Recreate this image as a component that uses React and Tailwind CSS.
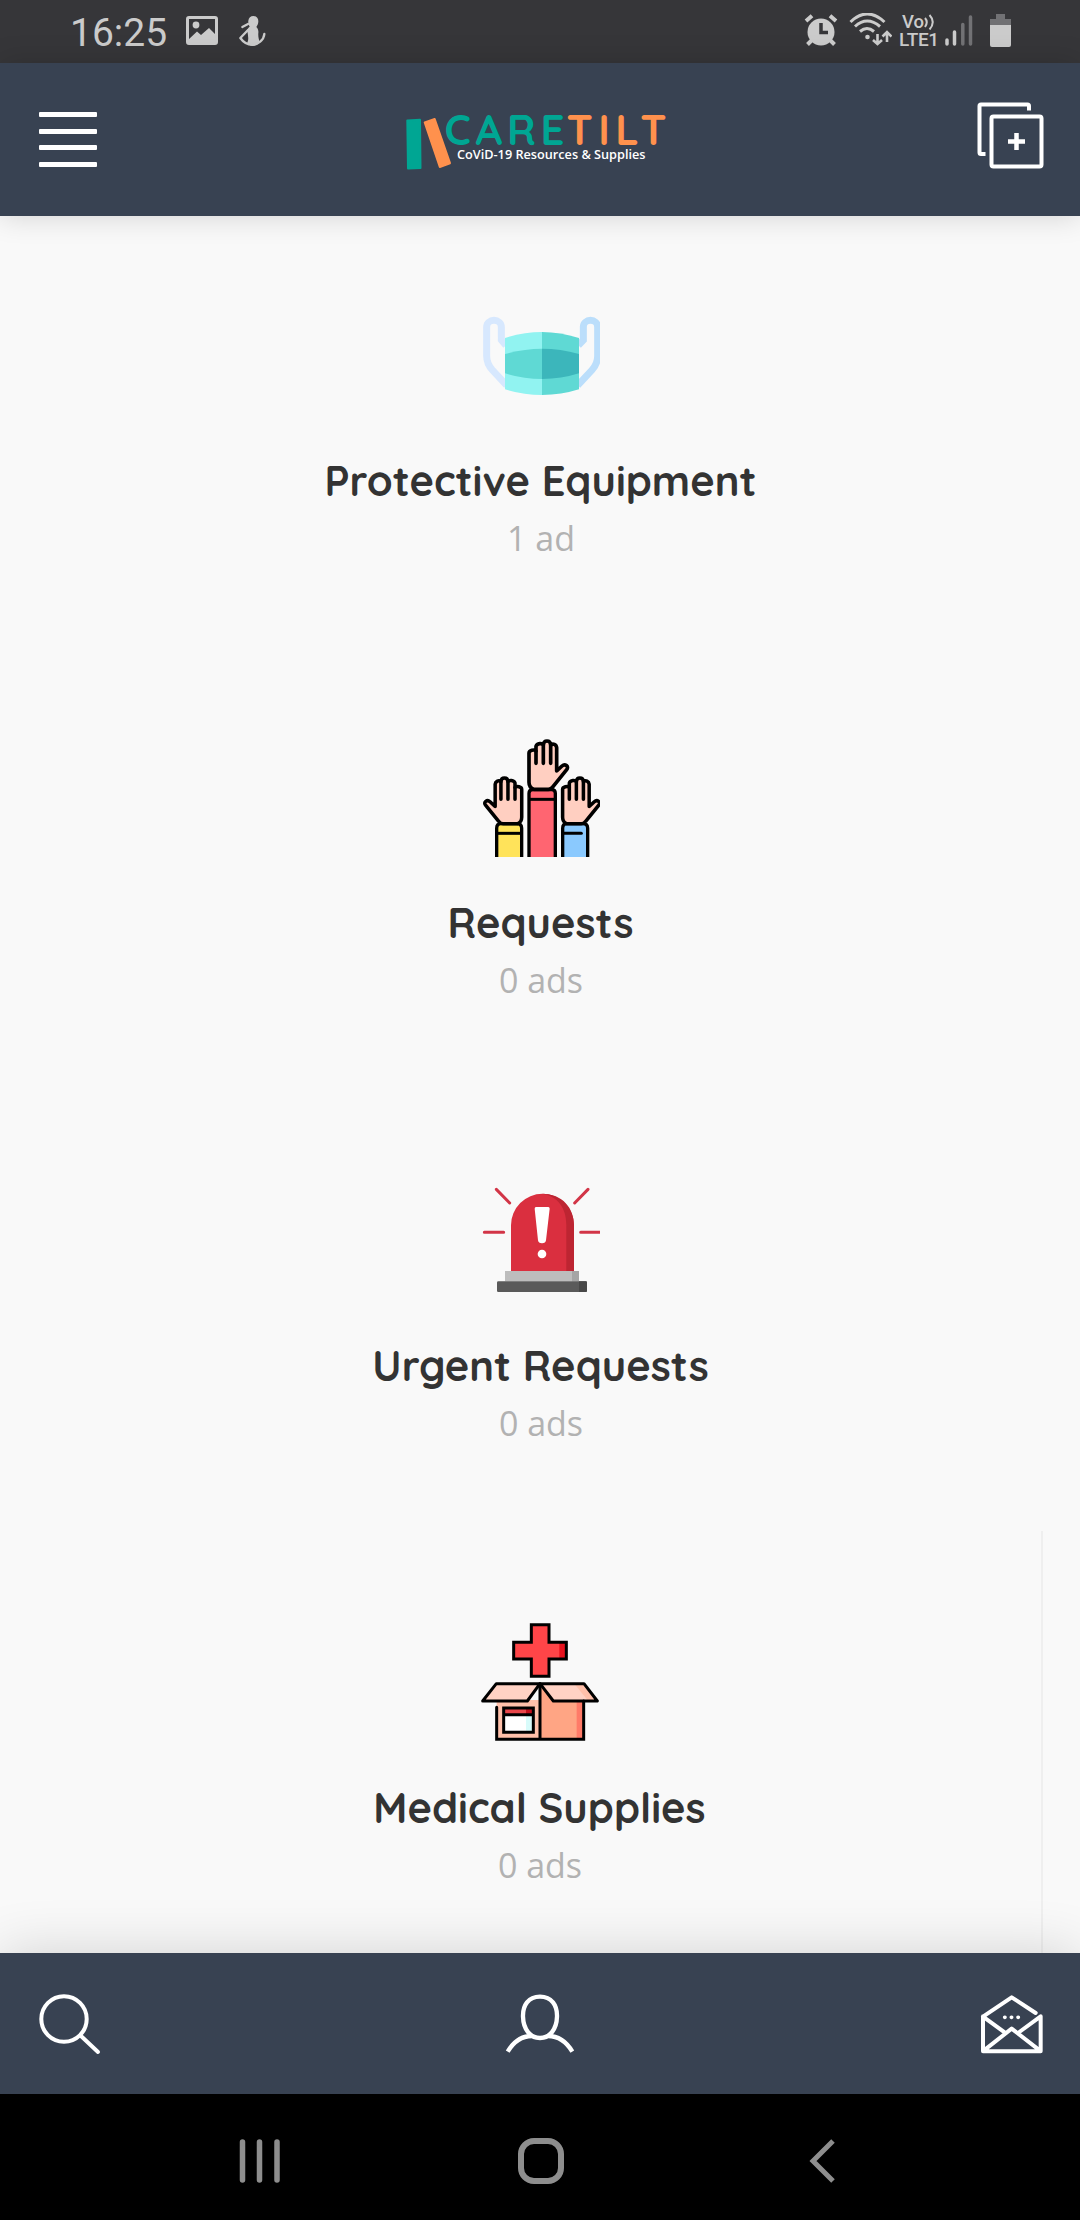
import React from "react";

function MaskIcon() {
  return (
    <svg className="size-[118px]" viewBox="63 18 354 354" fill="none">
      <path d="M135 163L121 147V108a22 20 0 0 0-44 0V195Q77 218 94 237L137 283" stroke="#d7e8fe" strokeWidth="21" />
      <path d="M352 163L367 147V108a21.500 20 0 0 1 43 0V195Q410 218 393 237L350 283" stroke="#bbdefb" strokeWidth="21" />
      <path d="M132 141Q188 123 243 123V312Q185 312 132 295Z" fill="#91f3f1" />
      <path d="M354 141Q298 123 243 123V312Q301 312 354 295Z" fill="#5fd9d4" />
      <path d="M132 189Q188 173 243 173V264Q185 264 132 247Z" fill="#5fd9d4" />
      <path d="M354 189Q298 173 243 173V264Q301 264 354 247Z" fill="#3cb6bb" />
    </svg>
  );
}

function Hand() {
  return (
    <g stroke="#000" strokeWidth="11" strokeLinejoin="round" strokeLinecap="round">
      <path
        d="M4 100V40C4 32 20 28 25 34V20C28 10 44 10 47 16C48 0 68 0 69 16C76 10 86 14 87 24V94L103 79C112 71 125 80 117 90L76 141Q70 149 62 149H18Q4 144 4 128Z"
        fill="#ffcfc1"
      />
      <path d="M25 34V71M47 16V71M69 16V71" />
    </g>
  );
}

function HandsIcon() {
  return (
    <svg className="size-[118px]" viewBox="63 57 354 354" fill="none">
      <path d="M204 412V220Q204 209 216 209H272Q283 209 283 220V412" fill="#ff6571" stroke="#000" strokeWidth="10" />
      <path d="M204 238H283" stroke="#000" strokeWidth="9" />
      <path d="M107 412V325Q107 311 120 311H168Q182 311 182 325V412" fill="#ffe35a" stroke="#000" strokeWidth="10" />
      <path d="M107 340H182" stroke="#000" strokeWidth="9" />
      <path d="M305 412V325Q305 311 318 311H366Q380 311 380 325V412" fill="#8ac9fe" stroke="#000" strokeWidth="10" />
      <path d="M305 340H361" stroke="#000" strokeWidth="9" strokeLinecap="round" />
      <g transform="translate(200 59)"><Hand /></g>
      <g transform="translate(186 170) scale(-.96 .95)"><Hand /></g>
      <g transform="translate(301 170) scale(.96 .95)"><Hand /></g>
    </svg>
  );
}

function SirenIcon() {
  return (
    <svg className="size-[118px]" viewBox="63 33 354 354" fill="none">
      <path d="M150 304V166A94.500 94.500 0 0 1 339 166V304Z" fill="#da2f3f" />
      <path d="M243 71.500C305 71.500 339 115 339 166V304H316V166C316 112 289 79 243 71.500Z" fill="#bd2532" />
      <path d="M132 303H354V334H132Z" fill="#bdbdbd" />
      <path d="M333 303H354V334H333Z" fill="#a5a5a5" />
      <rect x="108" y="334" width="270" height="32" rx="4" fill="#5a5a5a" />
      <path d="M354 334H374Q378 334 378 338V362Q378 366 374 366H354Z" fill="#484848" />
      <path d="M225 111H262Q266 111 266 116L255 211Q254 220 243 220Q232 220 231 211L221 116Q221 111 225 111Z" fill="#fff" />
      <circle cx="243" cy="252" r="13" fill="#fff" />
      <path d="M70 187H128M359 187H416M106 58L146 99M381 58L341 99" stroke="#d23547" strokeWidth="9" strokeLinecap="round" />
    </svg>
  );
}

function SuppliesIcon() {
  return (
    <svg className="size-[118px]" viewBox="63 54 354 354" fill="none">
      <path d="M214 59H267V112H319V162H267V214H214V162H161V112H214Z" fill="#ff4548" />
      <path d="M298 112H319V162H298Z" fill="#e8121e" />
      <path d="M214 59H267V112H319V162H267V214H214V162H161V112H214Z" stroke="#000" strokeWidth="9" />
      <path d="M110 285H240V403H110Z" fill="#ffc0aa" />
      <path d="M240 240L280 290H371V403H240Z" fill="#ffa584" />
      <path d="M350 290H371V403H350Z" fill="#ff7b68" />
      <path d="M109 236H240L202 288H68Z" fill="#ffd2c4" stroke="#000" strokeWidth="9" strokeLinejoin="round" />
      <path d="M240 236H372L412 288H280Z" fill="#ffd2c4" />
      <path d="M346 240H372L410 286H383Z" fill="#ffc0aa" />
      <path d="M240 236H372L412 288H280Z" stroke="#000" strokeWidth="9" strokeLinejoin="round" />
      <path d="M110 307V403H371V288M240 236V403" stroke="#000" strokeWidth="9" strokeLinecap="round" />
      <path d="M131 329H220V382H131Z" fill="#fff" />
      <path d="M198 329H220V382H198Z" fill="#d8fbfa" />
      <path d="M131 309H220V329H131Z" fill="#e9474b" />
      <path d="M198 309H220V329H198Z" fill="#c30e1b" />
      <path d="M131 309H220V382H131ZM131 329H220" stroke="#000" strokeWidth="9" />
    </svg>
  );
}

const categories = [
  { title: "Protective Equipment", count: "1 ad", Icon: MaskIcon },
  { title: "Requests", count: "0 ads", Icon: HandsIcon },
  { title: "Urgent Requests", count: "0 ads", Icon: SirenIcon },
  { title: "Medical Supplies", count: "0 ads", Icon: SuppliesIcon },
];

function StatusBar() {
  return (
    <div className="flex h-[63px] items-start justify-between bg-[#363639] font-[Roboto] text-[#cbcbcb]">
      <div className="flex h-full items-start pl-[70px]">
        <span className="w-[116px] pt-[12px] text-[39px] leading-[42px] whitespace-nowrap">16:25</span>
        <svg className="mt-[16px] h-[29px] w-[32px]" viewBox="0 0 32 29" fill="none">
          <rect x="1.500" y="1.500" width="29" height="26" rx="1.500" stroke="#cbcbcb" strokeWidth="3" />
          <circle cx="10" cy="9" r="3.400" fill="#cbcbcb" />
          <path d="M2 24L11 15.500L15 19L23 12L30 19V27H2Z" fill="#cbcbcb" />
        </svg>
        <svg className="mt-[16px] ml-[21px] h-[30px] w-[27px]" viewBox="0 0 81 90" fill="none">
          <path d="M43 0C53 0 58 7 58 16C58 24 55 29 52 33C57 38 59 45 58 51C57 63 60 72 62 78Q52 90 40 90Q29 89 25 80C30 70 27 58 25 45C25 38 28 35 32 32C29 27 27 20 28 14C29 6 35 0 43 0Z" fill="#cbcbcb" />
          <path d="M10 33L27 24" stroke="#cbcbcb" strokeWidth="7" strokeLinecap="round" />
          <path d="M27 42L4 66Q18 86 40 86C56 86 75 72 76 54" stroke="#cbcbcb" strokeWidth="7" strokeLinecap="round" strokeLinejoin="round" />
          <path d="M13 66L23 57V75Z" fill="#363639" />
        </svg>
      </div>
      <div className="flex items-start pr-[68px]">
        <svg className="mt-[14px] h-[32px] w-[34px]" viewBox="0 0 34 32" fill="none">
          <circle cx="17" cy="18" r="13.500" fill="#cbcbcb" />
          <path d="M2 7L8 1.800M32 7L26 1.800" stroke="#cbcbcb" strokeWidth="4" />
          <path d="M8 26L3.500 30.500M26 26L30.500 30.500" stroke="#cbcbcb" strokeWidth="4" />
          <path d="M17 9V18.500H24" stroke="#363639" strokeWidth="3.500" />
        </svg>
        <svg className="mt-[13px] ml-[11px] h-[33px] w-[43px]" viewBox="0 0 43 33" fill="none" stroke="#cbcbcb" strokeWidth="3">
          <path d="M1.500 9Q18-7 35.500 9M6 13.500Q18 2.500 31 13.500M11 18.500Q18 12.500 25 18.500" />
          <circle cx="18.500" cy="24" r="2.300" fill="#cbcbcb" stroke="none" />
          <path d="M28.500 21V31M24 27L28.500 31L33 27M38 29V19.500M33.500 23.500L38 19L42.500 23.500" strokeWidth="2.600" />
        </svg>
        <div className="mt-[14px] ml-[7px] flex h-[34px] w-[40px] flex-col font-medium">
          <div className="flex h-[17px] pl-[3px]">
            <span className="text-[18.500px] leading-[17px]">Vo</span>
            <svg className="h-[16px] w-[11px] shrink-0" viewBox="0 0 11 16" fill="none" stroke="#cbcbcb" strokeWidth="2">
              <path d="M1 4Q4.500 8 1 13M5.500 1Q12 8 5.500 15.500" />
            </svg>
          </div>
          <span className="text-[19px] leading-[17px] tracking-[-0.300px]">LTE1</span>
        </div>
        <svg className="mt-[15px] ml-[6px] h-[31px] w-[28px]" viewBox="0 0 28 31" strokeWidth="3.500" strokeLinecap="round">
          <path d="M2 25V29M9.500 17V29" stroke="#cbcbcb" />
          <path d="M17.800 9.500V29M25.500 2V29" stroke="#727275" />
        </svg>
        <svg className="mt-[14px] ml-[17px] h-[33px] w-[22px]" viewBox="0 0 22 33">
          <path d="M6 0H15V5H21V12H0V5H6Z" fill="#717174" />
          <path d="M0 11H21V31Q21 33 19 33H2Q0 33 0 31Z" fill="#cbcbcb" />
        </svg>
      </div>
    </div>
  );
}

function Logo() {
  return (
    <svg className="h-[62px] w-[264px] overflow-visible" viewBox="0 0 264 62" aria-label="CareTilt">
      <path d="M2.300 11.500L15 10.800L15.500 59L3 59.500Z" fill="#00a693" stroke="#00a693" strokeWidth="2" strokeLinejoin="round" />
      <path d="M19.700 13.500L29.700 10L45 54.200L34.800 58Z" fill="#ff914d" stroke="#ff914d" strokeWidth="2" strokeLinejoin="round" />
      <g fontFamily="Quicksand, Lato, sans-serif" fontSize="42" fontWeight="700">
        <text x="39.500" y="35.500" fill="#00a693" textLength="120" lengthAdjust="spacing">CARE</text>
        <text x="161.500" y="35.500" fill="#ff914d" textLength="100" lengthAdjust="spacing">TILT</text>
      </g>
      <text x="52" y="49.500" fill="#fff" fontFamily="Open Sans" fontWeight="600" fontSize="12.500" textLength="188.500" lengthAdjust="spacingAndGlyphs">
        CoViD-19 Resources &amp; Supplies
      </text>
    </svg>
  );
}

function Header() {
  return (
    <header className="relative z-10 flex h-[153px] items-center justify-between bg-[#384252] pr-[36px] pl-[39px] shadow-[0_0_28px_rgba(0,0,0,0.160)]">
      <div className="flex w-[66px] flex-col gap-[11.500px]">
        <div className="h-[5px] w-[58px] rounded-[1px] bg-white" />
        <div className="h-[5px] w-[58px] rounded-[1px] bg-white" />
        <div className="h-[5px] w-[58px] rounded-[1px] bg-white" />
        <div className="h-[5px] w-[58px] rounded-[1px] bg-white" />
      </div>
      <div className="mr-[8px]">
        <Logo />
      </div>
      <svg className="-mt-[9px] h-[67px] w-[67px]" viewBox="0 0 67 67" fill="none" stroke="#fff" strokeWidth="4">
        <path d="M52 8.500V4Q52 2.500 50.500 2.500H4Q2.500 2.500 2.500 4V50.500Q2.500 52 4 52H8.500" />
        <rect x="14.500" y="14.500" width="50" height="50" rx="2" />
        <path d="M31 39.500H48M39.500 31V48" strokeWidth="4.500" />
      </svg>
    </header>
  );
}

function Category({ title, count, Icon, outlined }) {
  return (
    <section
      className={`flex h-[442.300px] shrink-0 flex-col items-center pt-[92.500px] ${outlined ? "mr-[37px] ml-[38px] border-r-2 border-[#efefef]" : "mx-[38px] pl-[1px]"}`}
    >
      <Icon />
      <h2 className="mt-[37.500px] font-[Quicksand,Lato,sans-serif] text-[41.600px] leading-[56px] font-bold whitespace-nowrap text-[#333]">
        {title}
      </h2>
      <p className="mt-[7px] pl-[1px] font-['Open_Sans'] text-[34px] leading-[46px] text-[#b2b2b2]">{count}</p>
    </section>
  );
}

function TabBar() {
  return (
    <nav className="relative z-10 flex h-[141px] items-center justify-between bg-[#384252] pr-[36px] pl-[39px] shadow-[0_0_56px_rgba(0,0,0,0.160)]">
      <svg className="h-[62px] w-[62px]" viewBox="0 0 62 62" fill="none" stroke="#fff" strokeWidth="4" strokeLinecap="round">
        <circle cx="25" cy="26" r="22.700" />
        <path d="M42 43L59 59" />
      </svg>
      <svg className="mr-[2px] h-[62px] w-[70px]" viewBox="0 0 210 186" fill="none" stroke="#fff" strokeWidth="13">
        <path d="M105 11C140 11 157 37 156 71C155 109 134 135 105 135C76 135 55 109 54 71C53 37 70 11 105 11Z" />
        <path d="M8 176C25 147 51 128 84 129M202 176C185 147 159 128 126 129" />
      </svg>
      <svg className="h-[62px] w-[64px]" viewBox="26 26 192 186" fill="none" stroke="#fff" strokeWidth="12">
        <path d="M35 96V201H208V96L144 143M35 97L121 39L193 86M35 97L101 145M38 198L121 133L205 198" strokeLinecap="round" strokeLinejoin="round" />
        <path d="M100 99H101M120 99H121M140 99H141" strokeLinecap="round" strokeWidth="11" />
      </svg>
    </nav>
  );
}

function SystemNav() {
  return (
    <div className="flex h-[126px] items-center justify-between bg-black pt-[7px] pr-[244px] pl-[238px]">
      <svg className="h-[44px] w-[44px]" viewBox="0 0 44 44" stroke="#8e8e8e" strokeWidth="5.500" strokeLinecap="round">
        <path d="M4.500 3V41M21.500 3V41M39 3V41" />
      </svg>
      <svg className="mr-[8px] h-[48px] w-[48px]" viewBox="0 0 48 48" fill="none" stroke="#8e8e8e" strokeWidth="6">
        <rect x="4" y="4" width="40" height="40" rx="13" />
      </svg>
      <svg className="h-[46px] w-[28px]" viewBox="0 0 28 46" fill="none" stroke="#8e8e8e" strokeWidth="5">
        <path d="M25 3L5 23L25 43" />
      </svg>
    </div>
  );
}

export default function App() {
  return (
    <div className="flex h-[2220px] w-[1080px] flex-col overflow-hidden bg-[#f9f9f9]">
      <StatusBar />
      <Header />
      <main className="-mt-[12px] flex h-[1749px] shrink-0 flex-col overflow-hidden">
        {categories.map((category, index) => (
          <Category key={category.title} {...category} outlined={index === 3} />
        ))}
      </main>
      <TabBar />
      <SystemNav />
    </div>
  );
}
